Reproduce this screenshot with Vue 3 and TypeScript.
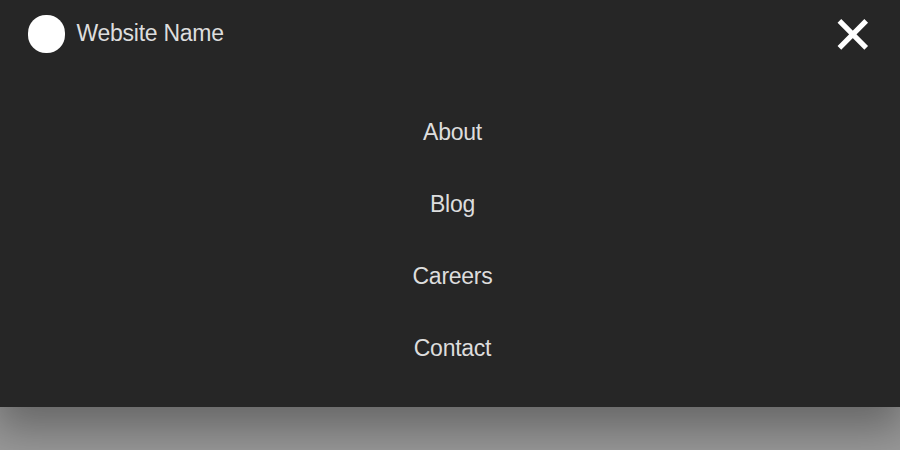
<script setup lang="ts">
const links: string[] = ['About', 'Blog', 'Careers', 'Contact']
</script>

<template>
  <div class="page">
    <header class="menu">
      <div class="bar">
        <div class="brand">
          <span class="logo"></span>
          <span class="name">Website Name</span>
        </div>
        <button class="close" aria-label="Close menu">
          <svg width="32" height="32" viewBox="0 0 32 32">
            <path d="M2.4 2.9 29.2 29.9M29.2 2.9 2.4 29.9" />
          </svg>
        </button>
      </div>
      <nav class="links">
        <a v-for="link in links" :key="link" class="link">{{ link }}</a>
      </nav>
    </header>
  </div>
</template>

<style>
body {
  margin: 0;
}
</style>

<style scoped>
.page {
  height: 450px;
  overflow: hidden;
  background: #999;
  font-family: "Liberation Sans", Arial, sans-serif;
  font-size: 23px;
  letter-spacing: -0.26px;
  color: #ddd;
}
.menu {
  box-sizing: border-box;
  height: 407px;
  background: #262626;
  box-shadow: 0 18px 40px 4px rgba(0, 0, 0, 0.33);
}
.bar {
  display: flex;
  align-items: center;
  justify-content: space-between;
  box-sizing: border-box;
  height: 68px;
  padding: 0 31px 0 28px;
}
.brand {
  display: flex;
  align-items: center;
  gap: 11.5px;
}
.logo {
  width: 37px;
  height: 38px;
  border-radius: 18px;
  background: #fff;
}
.name {
  padding-bottom: 2px;
  line-height: 28px;
}
.close {
  display: flex;
  padding: 0;
  border: 0;
  background: none;
}
.close path {
  fill: none;
  stroke: #fff;
  stroke-width: 5.2;
}
.links {
  display: flex;
  flex-direction: column;
  align-items: center;
  padding: 28px 0 0 5px;
}
.link {
  line-height: 72px;
}
</style>
